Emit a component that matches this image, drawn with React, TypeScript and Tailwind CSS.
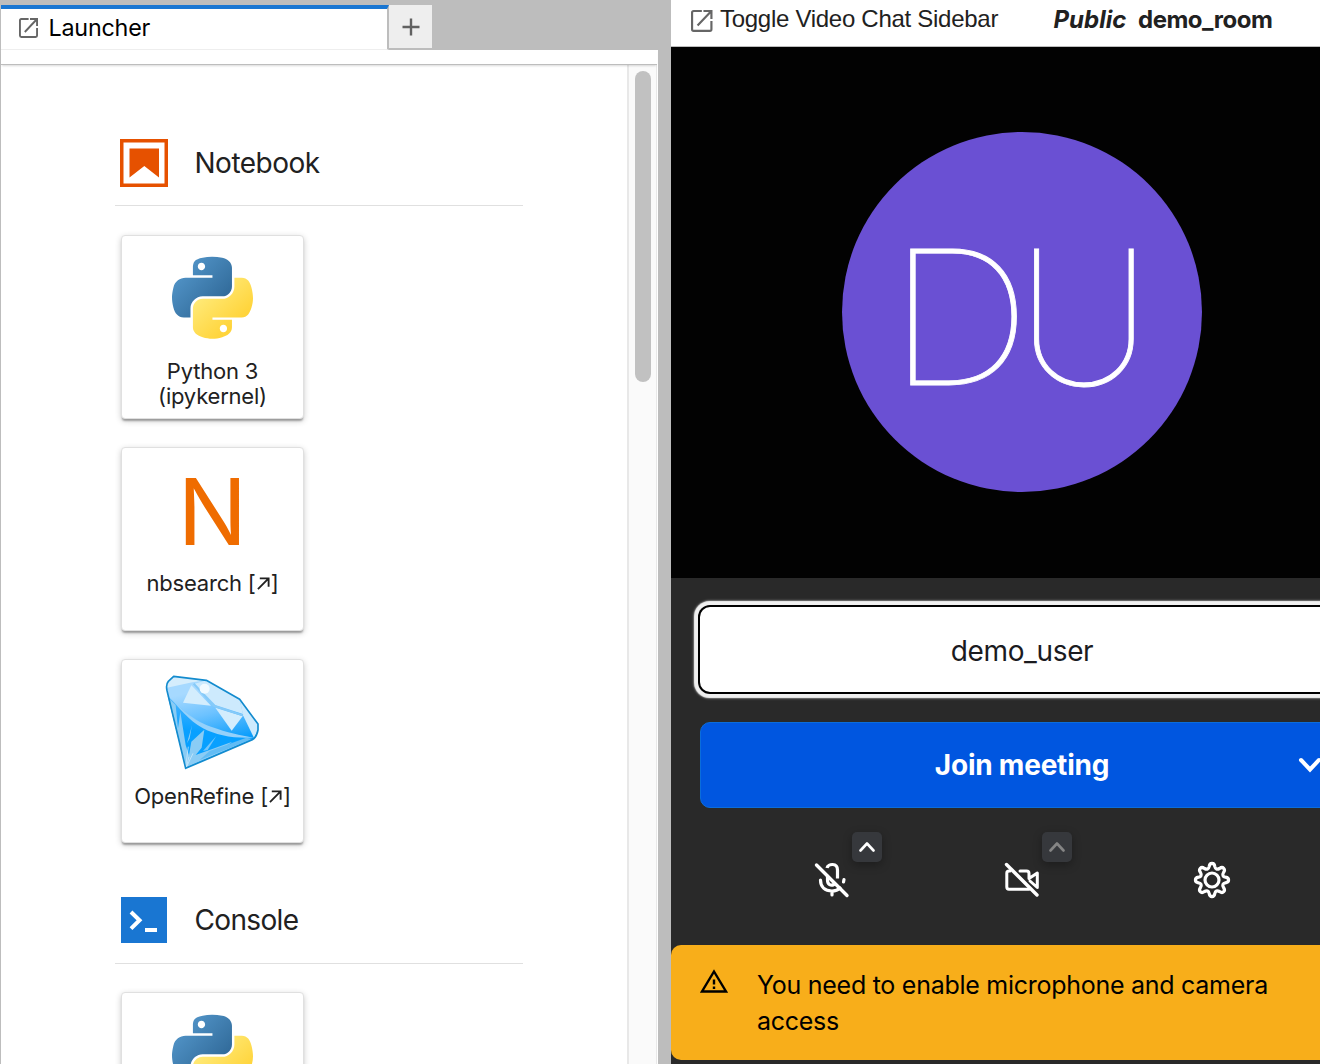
import React from "react";

function LaunchIcon({ className }: { className: string }) {
  return (
    <svg viewBox="0 0 19 19.7" preserveAspectRatio="none" className={className} fill="none" stroke="#666666" strokeWidth="1.900">
      <path d="M9.600 0.950H2.300Q0.950 0.950 0.950 2.300V17.300Q0.950 18.700 2.300 18.700H16.700Q18.050 18.700 18.050 17.300V9.800" />
      <path d="M11 0.950H18.050V8M17.800 1.200L5.800 13.800" />
    </svg>
  );
}

function PythonLogo({ id }: { id: string }) {
  return (
    <svg viewBox="0 0 111.16 111.6" className="mr-px h-[83px] w-[81px]">
      <defs>
        <linearGradient id={`${id}-blue`} x1="0" y1="0" x2="0.85" y2="0.8">
          <stop offset="0" stopColor="#5a9fd4" />
          <stop offset="1" stopColor="#306998" />
        </linearGradient>
        <linearGradient id={`${id}-yellow`} x1="0.25" y1="0.25" x2="0.7" y2="0.75">
          <stop offset="0" stopColor="#ffe873" />
          <stop offset="1" stopColor="#ffd43b" />
        </linearGradient>
      </defs>
      <path
        fill={`url(#${id}-blue)`}
        d="M54.919 0C50.335.022 45.958.413 42.106 1.095 30.760 3.099 28.700 7.295 28.700 15.032v10.219h26.813v3.406H18.638c-7.793 0-14.616 4.684-16.750 13.594-2.462 10.213-2.571 16.586 0 27.250 1.906 7.938 6.457 13.594 14.250 13.594h9.219v-12.250c0-8.850 7.657-16.656 16.750-16.656h26.781c7.455 0 13.406-6.138 13.406-13.625V15.032c0-7.266-6.130-12.725-13.406-13.937C64.282.328 59.502-.020 54.919 0zm-14.500 8.220c2.770 0 5.031 2.298 5.031 5.125 0 2.816-2.261 5.093-5.031 5.093-2.779 0-5.031-2.277-5.031-5.093 0-2.827 2.252-5.125 5.031-5.125z"
      />
      <path
        fill={`url(#${id}-yellow)`}
        d="M85.638 28.657v11.906c0 9.231-7.826 17-16.750 17H42.107c-7.336 0-13.406 6.279-13.406 13.625V96.720c0 7.266 6.318 11.540 13.406 13.625 8.487 2.495 16.626 2.946 26.781 0 6.750-1.955 13.406-5.888 13.406-13.625V86.501H55.513v-3.406h40.187c7.793 0 10.697-5.436 13.407-13.594 2.799-8.399 2.680-16.476 0-27.250-1.926-7.758-5.604-13.594-13.407-13.594zM70.575 93.313c2.780 0 5.031 2.278 5.031 5.094 0 2.826-2.251 5.125-5.031 5.125-2.769 0-5.031-2.299-5.031-5.125 0-2.816 2.262-5.094 5.031-5.094z"
      />
    </svg>
  );
}

function DiamondLogo() {
  return (
    <svg viewBox="190 66 300 300" className="h-[100px] w-[100px]">
      <defs>
        <linearGradient id="gem-body" x1="0.35" y1="0.15" x2="0.5" y2="0.75">
          <stop offset="0" stopColor="#a6d9ff" />
          <stop offset="0.45" stopColor="#6cc2ff" />
          <stop offset="1" stopColor="#0a9dfb" />
        </linearGradient>
        <linearGradient id="gem-low" x1="0.6" y1="0.1" x2="0.5" y2="0.8">
          <stop offset="0" stopColor="#4bb5ff" />
          <stop offset="0.6" stopColor="#08a0ff" />
        </linearGradient>
      </defs>
      <path d="M222 79L320 91L420 148L475 222V240Q471 262 458 269L258 355L202 122Q198 103 206 94Z" fill="url(#gem-body)" />
      <path d="M204 138C240 170 280 215 340 238C385 255 420 262 462 266L258 355Z" fill="url(#gem-low)" />
      <path d="M222 79L320 91L278 97L202 113Q200 100 206 94Z" fill="#d5edfc" />
      <path d="M320 91L420 148L430 192L347 165L286 101Z" fill="#cdeafd" />
      <path d="M420 148L475 222V240L463 264L430 196Z" fill="#cdeafd" />
      <path d="M275 106L334 167L250 158Z" fill="#d3edfd" />
      <path d="M347 173L429 199L396 242Z" fill="#d3edfd" />
      <path d="M282 101L343 168L430 196" fill="none" stroke="#86caf8" strokeWidth="6" />
      <circle cx="315" cy="116" r="15" fill="#f1faff" />
      <path d="M204 138C230 157 268 208 334 230C385 248 420 255 463 263C400 266 350 256 310 235C265 210 240 173 204 138Z" fill="#95d1fa" />
      <path d="M207 145L228 165L235 235L242 185L258 285L268 315L275 275L314 239L306 293L288 315L398 275L376 291L458 266L258 353Z" fill="#8accf5" />
      <path d="M262 280L277 226L270 265Z" fill="#8accf5" />
      <path d="M310 303L350 258L324 300Z" fill="#74c6fb" />
      <path d="M268 320L260 352L280 310M248 315L258 350L266 290" stroke="#d7effc" strokeWidth="2" fill="none" />
      <path d="M330 303L440 263L458 267L300 330Z" fill="#62bcf4" />
      <path d="M222 79L320 91L420 148L475 222V240Q471 262 458 269L258 355L202 122Q198 103 206 94Z" fill="none" stroke="#138bce" strokeWidth="5" strokeLinejoin="round" />
    </svg>
  );
}

function Card({ icon, children }: { icon: React.ReactNode; children?: React.ReactNode }) {
  return (
    <div className="flex h-[184px] w-[183px] shrink-0 flex-col items-center rounded-[4px] border border-[#e0e0e0] bg-white shadow-[0_3px_2px_-1px_rgba(0,0,0,0.3),0_2px_6px_rgba(0,0,0,0.2)]">
      <div className="flex h-[123px] w-full items-center justify-center">{icon}</div>
      <div className="text-center text-[22px] leading-[25px] tracking-[-0.2px] whitespace-nowrap text-[#212121]">
        {children}
      </div>
    </div>
  );
}

function ExternalMark() {
  return (
    <span className="inline-flex items-center">
      [
      <svg viewBox="0 0 14 14" className="mx-px h-[13px] w-[13px]" fill="none" stroke="#212121" strokeWidth="2">
        <path d="M1 13L12.500 1.500M3 1.500H12.500V10.500" />
      </svg>
      ]
    </span>
  );
}

function SectionHeading({ icon, children }: { icon: React.ReactNode; children: React.ReactNode }) {
  return (
    <div className="flex h-[68px] items-start border-b border-[#e0e0e0] pl-[5px]">
      {icon}
      {children}
    </div>
  );
}

function LauncherPanel() {
  return (
    <section className="flex h-full w-[658px] shrink-0 flex-col border-l border-[#bdbdbd]">
      <div className="flex h-[50px] shrink-0 pt-[4px]">
        <div className="mt-px flex h-[45px] w-[388px] items-center border-r-2 border-b border-r-[#bdbdbd] border-b-[#eeeeee] border-t-4 border-t-[#1976d2] bg-white pl-[18px]">
          <LaunchIcon className="mb-[2px] h-[20px] w-[19px]" />
          <span className="mb-[2px] ml-[10.500px] text-[23.300px] leading-[36px] tracking-[-0.2px] text-black">Launcher</span>
        </div>
        <div className="mt-px flex h-[43px] w-[43px] items-center justify-center bg-[#eeeeee]">
          <svg viewBox="0 0 18 18" className="h-[18px] w-[18px]" stroke="#616161" strokeWidth="2.400">
            <path d="M9 0.500V17.500M0.500 9H17.500" />
          </svg>
        </div>
      </div>
      <div className="relative z-10 h-[15px] shrink-0 bg-white pr-px">
        <div className="h-[15px] border-b border-[#bdbdbd] shadow-[0_2px_2px_-1px_rgba(0,0,0,0.15)]" />
      </div>
      <div className="flex min-h-0 flex-1 overflow-hidden bg-white">
        <div className="flex-1 pt-[73px] pl-[114px]">
          <div className="w-[408px]">
            <SectionHeading
              icon={
                <svg viewBox="0 0 48 48" className="mt-px h-[48px] w-[48px]">
                  <rect x="1.750" y="1.750" width="44.500" height="44.500" fill="none" stroke="#e65100" strokeWidth="3.500" />
                  <path d="M9.500 9.500H39V38.500L24.300 27L9.500 38.500Z" fill="#e65100" />
                </svg>
              }
            >
              <h2 className="mt-px ml-[26.500px] text-[28px] leading-[49px] tracking-[-0.5px] text-[#212121]">Notebook</h2>
            </SectionHeading>
            <div className="mt-[29px] flex flex-col gap-[28px] pl-[6px]">
              <Card icon={<PythonLogo id="notebook" />}>
                Python 3
                <br />
                (ipykernel)
              </Card>
              <Card icon={<span className="pt-[5px] text-[92px] leading-[100px] text-[#ef6c00]">N</span>}>
                nbsearch <ExternalMark />
              </Card>
              <Card icon={<DiamondLogo />}>
                <div className="pt-px">
                  OpenRefine <ExternalMark />
                </div>
              </Card>
            </div>
            <div className="mt-[53px]">
              <SectionHeading
                icon={
                  <svg viewBox="0 0 48 48" className="h-[48px] w-[48px]">
                    <rect x="1" y="1" width="46" height="46" fill="#1976d2" />
                    <path d="M11 16L19.500 24.300L11 32.600" fill="none" stroke="white" strokeWidth="4" />
                    <rect x="25" y="32" width="12" height="4" fill="white" />
                  </svg>
                }
              >
                <h2 className="ml-[26.500px] text-[28px] leading-[49px] tracking-[-0.65px] text-[#212121]">Console</h2>
              </SectionHeading>
              <div className="mt-[28px] pl-[6px]">
                <Card icon={<div className="pt-px"><PythonLogo id="console" /></div>} />
              </div>
            </div>
          </div>
        </div>
        <div className="mr-px flex w-[30px] shrink-0 justify-center border-r border-l-2 border-[#e8e8e8] bg-[#fafafa] pt-[6px]">
          <div className="h-[311px] w-[16px] rounded-full bg-[#c1c1c1]" />
        </div>
      </div>
    </section>
  );
}

function DeviceToggle({ icon, dim }: { icon: React.ReactNode; dim?: boolean }) {
  return (
    <div className="relative flex h-[40px] w-[40px] items-center justify-center">
      {icon}
      <span className="absolute top-[-28px] left-[40px] flex h-[30px] w-[30px] items-center justify-center rounded-[5px] bg-[#36383c] shadow-[0_3px_10px_rgba(0,0,0,0.3)]">
        <svg
          viewBox="0 0 16 10"
          className="h-[10px] w-[16px]"
          fill="none"
          stroke={dim ? "#858585" : "#ffffff"}
          strokeWidth="2.600"
          strokeLinecap="round"
          strokeLinejoin="round"
        >
          <path d="M1.500 8.500L8 1.500L14.500 8.500" />
        </svg>
      </span>
    </div>
  );
}

function MicOffIcon() {
  return (
    <svg viewBox="0 0 36 36" className="h-[36px] w-[36px]" fill="none" stroke="white" strokeWidth="3.200" strokeLinecap="round">
      <path d="M13 6C14 1.500 23.500 0.500 23.500 8V16.500" strokeLinecap="butt" />
      <path d="M13.500 14V18C13.500 23 17 24 20 22.500" />
      <path d="M6.500 18C6.500 25 11 29 18 29C21 29 24 28 26 26M30 17.500L29.500 20M18 29V33" />
      <path d="M5 2L34 31" stroke="#292929" strokeWidth="1" />
      <path d="M2.500 3L33 33.500" strokeWidth="3.400" />
    </svg>
  );
}

function CameraOffIcon() {
  return (
    <svg viewBox="0 0 36 36" className="h-[36px] w-[36px]" fill="none" stroke="white" strokeWidth="3" strokeLinecap="round" strokeLinejoin="round">
      <path d="M6 9H5Q2.800 9 2.800 11.200V25Q2.800 27.200 5 27.200H25" />
      <path d="M16 9H22.500Q25 9 25 11.500V16.500L33.300 11V25.500L26 19" />
      <path d="M5 2L34 31" stroke="#292929" strokeWidth="1.200" />
      <path d="M2.500 2.500L33 33" strokeWidth="3.400" />
    </svg>
  );
}

function GearIcon() {
  return (
    <svg viewBox="-20 -20 40 40" className="h-[40px] w-[40px]" fill="none" stroke="white" strokeWidth="3.200" strokeLinejoin="round">
      <circle r="7" />
      <path d="M-2.800 -13.500C-2.200 -17.600 2.200 -17.600 2.800 -13.500C3.400 -10.800 5.100 -10.100 7.500 -11.500C10.900 -14.000 14.000 -10.900 11.500 -7.500C10.100 -5.100 10.800 -3.400 13.500 -2.800C17.600 -2.200 17.600 2.200 13.500 2.800C10.800 3.400 10.100 5.100 11.500 7.500C14.000 10.900 10.900 14.000 7.500 11.500C5.100 10.100 3.400 10.800 2.800 13.500C2.200 17.600 -2.200 17.600 -2.800 13.500C-3.400 10.800 -5.100 10.100 -7.500 11.500C-10.900 14.000 -14.000 10.900 -11.500 7.500C-10.100 5.100 -10.800 3.400 -13.500 2.800C-17.600 2.200 -17.600 -2.200 -13.500 -2.800C-10.800 -3.400 -10.100 -5.100 -11.500 -7.500C-14.000 -10.900 -10.900 -14.000 -7.500 -11.500C-5.100 -10.100 -3.400 -10.800 -2.800 -13.500Z" />
    </svg>
  );
}

function VideoPanel() {
  return (
    <section className="ml-[13px] flex h-full w-[702px] shrink-0 flex-col bg-[#292929]">
      <header className="flex h-[47px] shrink-0 items-start border-b border-[#bdbdbd] bg-white pl-[20px] text-[#212121]">
        <LaunchIcon className="mt-[9.500px] h-[22px] w-[21.500px]" />
        <span className="ml-[7.500px] w-[333.500px] font-['Liberation_Sans',sans-serif] text-[24px] leading-[38px] tracking-[-0.280px] whitespace-nowrap">
          Toggle Video Chat Sidebar
        </span>
        <span className="w-[84.500px] text-[24px] leading-[40px] font-bold italic">Public</span>
        <span className="text-[24px] leading-[40px] font-bold tracking-[-0.5px]">demo_room</span>
      </header>
      <div className="flex h-[531px] shrink-0 items-start justify-center bg-[#020202] pt-[85px]">
        <div className="flex h-[360px] w-[360px] items-center justify-center rounded-full bg-[#6a50d3] pt-[10px] pr-[6px] text-[187px] leading-none font-thin text-white [-webkit-text-stroke:0.8px_white]">
          <span className="origin-left scale-x-[1.07]">D</span>
          <span className="-ml-[6px] origin-left scale-x-[1.01]">U</span>
        </div>
      </div>
      <div className="flex flex-col px-[29px] pt-[29px]">
        <div className="flex h-[85px] items-center justify-center rounded-[10px] bg-white pt-[2px] text-[28px] tracking-[-0.350px] text-[#1b1b1f] shadow-[0_0_0_2px_#000,0_0_1px_5.500px_#f0f0f0,0_0_3px_6px_#aaa]">
          demo_user
        </div>
        <div className="mt-[30px] flex h-[86px] items-center rounded-[10px] border border-[#0b6ddb] bg-[#0056e0] text-white">
          <span className="flex-1 pl-[68px] text-center text-[28px] font-bold tracking-[-0.220px]">Join meeting</span>
          <div className="flex w-[68px] justify-center pl-[2px]">
            <svg viewBox="0 0 24 16" className="h-[16px] w-[24px]" fill="none" stroke="white" strokeWidth="4" strokeLinecap="round">
              <path d="M3 3L12 12.500L21 3" />
            </svg>
          </div>
        </div>
        <div className="mt-[52px] flex justify-center gap-[150px]">
          <DeviceToggle icon={<MicOffIcon />} />
          <DeviceToggle icon={<CameraOffIcon />} dim />
          <GearIcon />
        </div>
      </div>
      <div className="mt-[45px] flex h-[115px] items-start rounded-[10px] bg-[#f8ae1a] pt-[22px] pl-[29px] text-black">
        <svg viewBox="0 0 28 24" className="mt-[2px] h-[24px] w-[28px]" fill="none" stroke="black" strokeWidth="2.400">
          <path d="M14 2.500L26 22.500H2Z" />
          <path d="M14 10.500V15.500M14 17.500V20" />
        </svg>
        <p className="ml-[29px] w-[550px] text-[25px] leading-[36px] tracking-[-0.270px]">
          You need to enable microphone and camera
          <br />
          access
        </p>
      </div>
    </section>
  );
}

export default function App() {
  return (
    <main className="flex h-[1064px] w-[1320px] overflow-hidden bg-[#bdbdbd] font-['Inter',sans-serif]">
      <LauncherPanel />
      <VideoPanel />
    </main>
  );
}
